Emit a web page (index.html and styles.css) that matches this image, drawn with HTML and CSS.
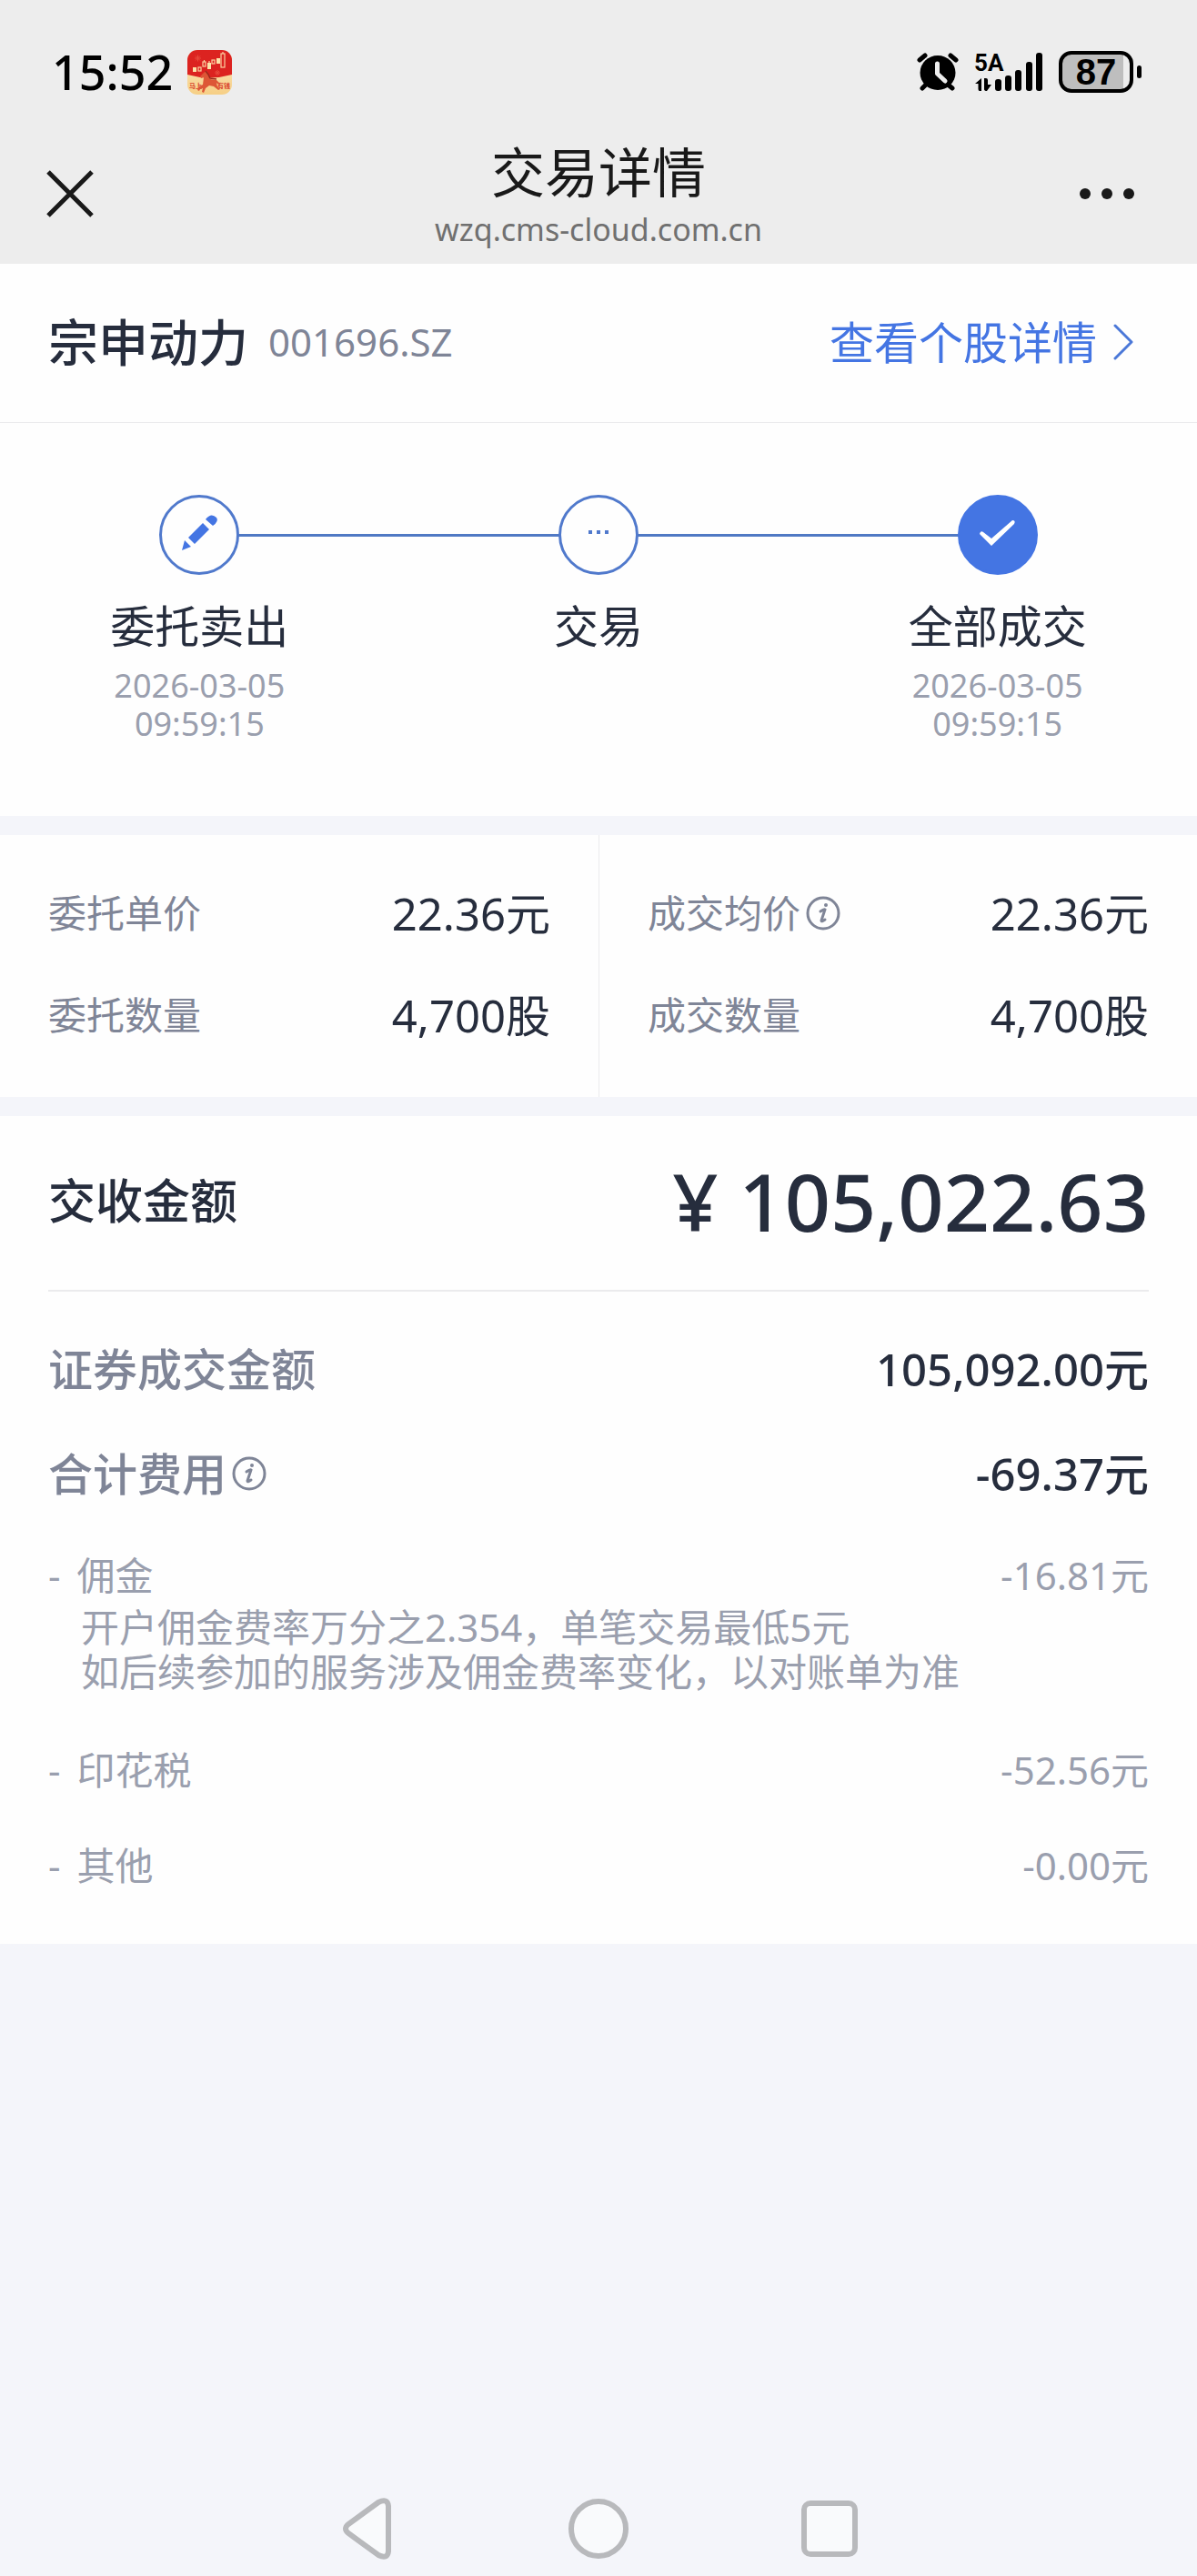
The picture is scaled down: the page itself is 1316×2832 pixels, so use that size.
FILE: index.html
```html
<!DOCTYPE html>
<html lang="zh-CN">
<head>
<meta charset="UTF-8">
<meta name="viewport" content="width=device-width, initial-scale=1.0">
<title>交易详情</title>
<link rel="stylesheet" href="styles.css">
</head>
<body>
<div class="page">

  <header class="topbar">
    <div class="status">
      <div class="status-left">
        <span class="time">15:52</span>
        <svg class="app-icon" viewBox="0 0 49 49" aria-hidden="true">
          <defs>
            <clipPath id="app-clip"><rect width="49" height="49" rx="11"/></clipPath>
            <linearGradient id="app-sand" x1="0" y1="0" x2="0" y2="1">
              <stop offset="0" stop-color="#fbe9c4"/>
              <stop offset="1" stop-color="#f6cf85"/>
            </linearGradient>
          </defs>
          <g clip-path="url(#app-clip)">
            <rect width="49" height="49" fill="url(#app-sand)"/>
            <path d="M0 0H49V27Q24 34 0 27Z" fill="#dc2320"/>
            <g stroke="#e84a3c" stroke-width="1"><path d="M8 9h7M11.500 5.500v7M9 6.500l5 5M14 6.500l-5 5M30 25h6M33 22v6M31 23l4 4M35 23l-4 4"/></g>
            <g fill="#fce3a9">
              <rect x="6" y="19" width="4" height="5"/><rect x="22" y="14" width="4" height="7"/><rect x="32" y="9" width="4" height="6"/>
            </g>
            <g fill="none" stroke="#fcd0a0" stroke-width="1.200">
              <rect x="12" y="19" width="3" height="4"/><rect x="17" y="13" width="3" height="5"/><rect x="27" y="11" width="3" height="4"/><rect x="37" y="4" width="4" height="15"/>
              <path d="M18.500 11v2M24 12v2M39 2v2"/>
            </g>
            <text class="app-text" x="2" y="42">马上</text>
            <text class="app-text" x="33" y="42">有钱</text>
            <path d="M14 29l4-4 3-2 2 5 2 4 7 1 4 4-2 1-2-2 1 4 3 3-2 1-5-4-5-1-4 3-2 5-2-1 1-4-3 1-1 2-2-1 2-4 4-2 1-8-3 1z" fill="#dd5636"/>
            <path d="M20 23l3 4 2 4 7 1" fill="none" stroke="#9c2a1c" stroke-width="1.500"/>
          </g>
        </svg>
      </div>
      <div class="status-right">
        <svg class="alarm" viewBox="0 0 46 44" aria-hidden="true">
          <g stroke="#000" stroke-width="5" stroke-linecap="round">
            <path d="M3 9L9 4M37 4L43 9M11 35L6 40M33 35L39 40"/>
          </g>
          <ellipse cx="23" cy="23" rx="19.500" ry="19"/>
          <path d="M22.500 13V24L31 32" fill="none" stroke="#ededed" stroke-width="5" stroke-linecap="round" stroke-linejoin="round"/>
        </svg>
        <svg class="signal" viewBox="0 0 76 44" role="img" aria-label="5A">
          <text class="signal-text" x="0" y="21">5A</text>
          <path d="M8 43V29L1 35H4.500V41Q4.500 43 6 43ZM11 29V41Q11 43 14 43L19 36H15V31Q15 29 13 29Z"/>
          <rect x="23" y="30" width="7" height="13" rx="3"/>
          <rect x="34" y="26" width="7" height="17" rx="3"/>
          <rect x="45" y="20" width="7" height="23" rx="3"/>
          <rect x="57" y="11" width="7" height="32" rx="3"/>
          <rect x="68" y="1" width="7" height="42" rx="3"/>
        </svg>
        <span class="battery">87</span>
      </div>
    </div>

    <div class="titlebar">
      <button class="icon-btn" type="button" aria-label="关闭">
        <svg viewBox="0 0 52 52" width="52" height="52"><path d="M2 2L50 50M50 2L2 50" stroke="#191919" stroke-width="5" fill="none"/></svg>
      </button>
      <div class="titles">
        <h1>交易详情</h1>
        <p>wzq.cms-cloud.com.cn</p>
      </div>
      <button class="icon-btn" type="button" aria-label="更多">
        <svg viewBox="0 0 62 52" width="62" height="52" fill="#191919"><circle cx="7" cy="26" r="6"/><circle cx="31" cy="26" r="6"/><circle cx="55" cy="26" r="6"/></svg>
      </button>
    </div>
  </header>

  <main>
    <!-- 股票 -->
    <section class="stock">
      <h2>宗申动力</h2>
      <span class="code">001696.SZ</span>
      <a class="stock-link" href="#">查看个股详情
        <svg viewBox="0 0 22 40" width="22" height="40"><path d="M2 2L20 20L2 38" fill="none" stroke="#4b78d8" stroke-width="3" stroke-linecap="round" stroke-linejoin="round"/></svg>
      </a>
    </section>

    <!-- 进度 -->
    <ol class="steps">
      <li class="step">
        <span class="dot">
          <svg viewBox="0 0 88 88" fill="#4475e3">
            <path d="M25 61L28 50L35 57ZM32 47L48 31L55 38L39 54ZM51 27Q57 19 63 25Q66 29 59 34Z"/>
          </svg>
        </span>
        <span class="step-name">委托卖出</span>
        <time>2026-03-05<br>09:59:15</time>
      </li>
      <li class="step">
        <span class="dot">
          <svg viewBox="0 0 88 88" fill="#5079cc"><path d="M33 39h4v4h-4zM42 39h4v4h-4zM51 39h4v4h-4z"/></svg>
        </span>
        <span class="step-name">交易</span>
      </li>
      <li class="step">
        <span class="dot done">
          <svg viewBox="0 0 88 88"><path d="M24 43Q25 39 28 41L37 48L60 28Q64 28 62 32L37 56Z" fill="#fff"/></svg>
        </span>
        <span class="step-name">全部成交</span>
        <time>2026-03-05<br>09:59:15</time>
      </li>
    </ol>

    <!-- 委托 / 成交 -->
    <section class="compare">
      <dl>
        <div class="pair"><dt>委托单价</dt><dd>22.36元</dd></div>
        <div class="pair"><dt>委托数量</dt><dd>4,700股</dd></div>
      </dl>
      <dl>
        <div class="pair">
          <dt>成交均价
            <svg class="info" viewBox="0 0 38 38"><circle cx="19" cy="19" r="17"/><path d="M16 17Q20 14 21 15L17 27Q17 29 21 26"/><circle class="info-dot" cx="22" cy="10" r="2"/></svg>
          </dt>
          <dd>22.36元</dd>
        </div>
        <div class="pair"><dt>成交数量</dt><dd>4,700股</dd></div>
      </dl>
    </section>

    <!-- 金额明细 -->
    <section class="amount">
      <div class="total">
        <h2>交收金额</h2>
        <strong>¥ 105,022.63</strong>
      </div>
      <dl class="sums">
        <div class="pair"><dt>证券成交金额</dt><dd>105,092.00元</dd></div>
        <div class="pair">
          <dt>合计费用
            <svg class="info" viewBox="0 0 38 38"><circle cx="19" cy="19" r="17"/><path d="M16 17Q20 14 21 15L17 27Q17 29 21 26"/><circle class="info-dot" cx="22" cy="10" r="2"/></svg>
          </dt>
          <dd>-69.37元</dd>
        </div>
      </dl>
      <dl class="fees">
        <div class="fee">
          <div class="pair"><dt><span>-</span> 佣金</dt><dd>-16.81元</dd></div>
          <dd class="fee-note">开户佣金费率万分之2.354，单笔交易最低5元<br>如后续参加的服务涉及佣金费率变化，以对账单为准</dd>
        </div>
        <div class="pair fee"><dt><span>-</span> 印花税</dt><dd>-52.56元</dd></div>
        <div class="pair fee"><dt><span>-</span> 其他</dt><dd>-0.00元</dd></div>
      </dl>
    </section>
  </main>

  <nav class="sysnav">
    <button class="icon-btn" type="button" aria-label="返回">
      <svg viewBox="0 0 70 70" width="70" height="70"><path d="M47 6L14 30Q8 35 14 40L47 64Q57 69 58 60V10Q57 1 47 6Z"/></svg>
    </button>
    <button class="icon-btn" type="button" aria-label="主页">
      <svg viewBox="0 0 70 70" width="70" height="70"><circle cx="35" cy="35" r="30"/></svg>
    </button>
    <button class="icon-btn" type="button" aria-label="最近任务">
      <svg viewBox="0 0 70 70" width="70" height="70"><rect x="7" y="7" width="56" height="56" rx="7"/></svg>
    </button>
  </nav>

</div>
</body>
</html>
```
FILE: styles.css
```css
:root {
  --bar: #ededed;
  --bg: #f4f5fa;
  --surface: #fefefe;
  --line: #ebebed;
  --blue: #4475e3;
  --text: #262d3d;
  --muted: #7f8597;
  --light: #9a9fae;
}

* { margin: 0; padding: 0; box-sizing: border-box; }

body {
  background: var(--bg);
  color: var(--text);
  font-family: 'Noto Sans', 'Noto Sans CJK SC', sans-serif;
  font-size: 49px;
  line-height: 60px;
}

.page {
  min-height: 100vh;
  display: flex;
  flex-direction: column;
}

svg { display: block; flex-shrink: 0; }
h1, h2 { font-weight: 500; }

.icon-btn {
  border: 0;
  background: none;
  display: flex;
}

/* Top bar */
.topbar {
  background: var(--bar);
  color: #000;
}

.status {
  display: flex;
  justify-content: space-between;
  align-items: center;
  height: 158px;
  padding: 0 70px 0 57px;
}

.status-left, .status-right {
  display: flex;
  align-items: center;
}
.status-left { gap: 16px; }
.status-right { gap: 17px; }

.time {
  font-size: 52px;
  font-weight: 500;
}

.app-icon { width: 49px; height: 49px; }
.app-text { font-size: 7px; font-weight: 700; fill: #d8402c; }
.alarm { width: 46px; height: 44px; }
.signal { width: 76px; height: 44px; overflow: visible; }
.signal-text { font: 700 26px Roboto, sans-serif; }

.battery {
  position: relative;
  width: 82px;
  height: 46px;
  border: 4px solid #000;
  border-radius: 14px;
  background: linear-gradient(90deg, #bebebe 90%, var(--bar) 90%);
  font: 700 40px/38px 'Liberation Sans', sans-serif;
  text-align: center;
}
.battery::after {
  content: '';
  position: absolute;
  left: 82px;
  top: 12px;
  width: 5px;
  height: 14px;
  border-radius: 3px;
  background: #000;
}

.titlebar {
  display: grid;
  grid-template-columns: 1fr auto 1fr;
  align-items: start;
  height: 132px;
  padding: 0 68px 0 51px;
}
.titlebar .icon-btn { margin-top: 29px; }
.titlebar .icon-btn:last-child { justify-self: end; }

.titles {
  padding-left: 17px;
  text-align: center;
}
.titles h1 {
  font-size: 59px;
  font-weight: 400;
  line-height: 62px;
  color: #191919;
}
.titles p {
  font-size: 34px;
  line-height: 64px;
  color: #707070;
}

/* Stock */
.stock {
  display: flex;
  align-items: center;
  height: 175px;
  padding: 0 70px 2px 53px;
  background: var(--surface);
  border-bottom: 1px solid var(--line);
}
.stock h2 { font-size: 55px; }
.code {
  margin-left: 22px;
  font-size: 42px;
  color: var(--muted);
}
.stock-link {
  display: flex;
  align-items: center;
  gap: 18px;
  margin-left: auto;
  color: var(--blue);
  text-decoration: none;
}

/* Steps */
.steps {
  display: grid;
  grid-template-columns: repeat(3, 1fr);
  padding: 79px 0 80px;
  background: var(--surface);
  list-style: none;
}
.step {
  position: relative;
  display: flex;
  flex-direction: column;
  align-items: center;
}
.step + .step::before {
  content: '';
  position: absolute;
  top: 43px;
  left: -50%;
  width: 100%;
  height: 3px;
  background: #5079c4;
}
.dot {
  position: relative;
  z-index: 1;
  width: 88px;
  height: 88px;
  border: 3px solid #5079cc;
  border-radius: 50%;
  background: var(--surface);
}
.dot svg { margin: -3px; }
.dot.done { background: var(--blue); border-color: var(--blue); }
.step-name { margin-top: 26px; }
.step time {
  margin-top: 15px;
  font-size: 36px;
  line-height: 42px;
  text-align: center;
  color: var(--light);
}

/* Label and value rows */
.pair {
  display: flex;
  justify-content: space-between;
  align-items: center;
}
.pair dt {
  display: flex;
  align-items: center;
  gap: 6px;
}
.info {
  width: 38px;
  height: 38px;
  fill: none;
  stroke: var(--muted);
  stroke-width: 3;
  stroke-linecap: round;
}
.info-dot { fill: var(--muted); stroke: none; }

.compare {
  display: grid;
  grid-template-columns: 1fr 1fr;
  margin: 21px 0;
  background: var(--surface);
}
.compare dl {
  display: flex;
  flex-direction: column;
  gap: 52px;
  padding: 56px 53px 60px;
}
.compare dl + dl { border-left: 1px solid var(--line); }
.compare dt { font-size: 42px; color: var(--muted); }

/* Amount */
.amount {
  padding: 0 53px 56px;
  background: var(--surface);
}
.total {
  display: flex;
  justify-content: space-between;
  align-items: center;
  height: 193px;
  padding-bottom: 6px;
  border-bottom: 2px solid var(--line);
}
.total h2 { font-size: 52px; }
.total strong {
  font-size: 88px;
  font-weight: 500;
}

.sums {
  display: flex;
  flex-direction: column;
  gap: 55px;
  padding-top: 55px;
  font-weight: 500;
}
.sums dt { color: var(--muted); }

.fees {
  margin-top: 52px;
  font-size: 42px;
  color: var(--light);
}
.fees dt { gap: 18px; }
.fee + .fee { margin-top: 45px; }
.fee-note {
  margin: 2px 0 54px;
  padding-left: 36px;
  line-height: 49px;
}

/* System navigation */
.sysnav {
  display: flex;
  justify-content: center;
  gap: 184px;
  margin-top: auto;
  padding-bottom: 17px;
}
.sysnav svg {
  fill: #f9fafc;
  stroke: #b8b9bc;
  stroke-width: 6;
}
```
